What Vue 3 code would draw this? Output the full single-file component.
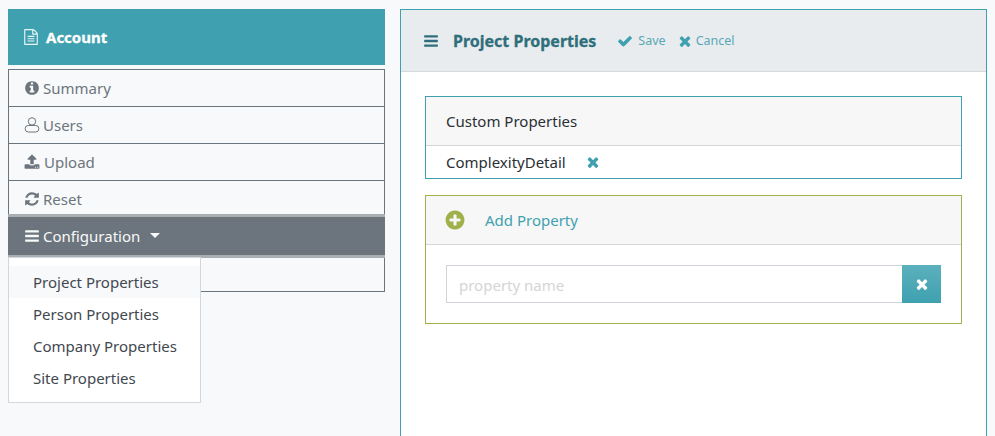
<script setup>
const P = {
  bars: 'M1664 1344v128q0 26-19 45t-45 19H192q-26 0-45-19t-19-45v-128q0-26 19-45t45-19h1408q26 0 45 19t19 45zm0-512v128q0 26-19 45t-45 19H192q-26 0-45-19t-19-45V832q0-26 19-45t45-19h1408q26 0 45 19t19 45zm0-512v128q0 26-19 45t-45 19H192q-26 0-45-19t-19-45V320q0-26 19-45t45-19h1408q26 0 45 19t19 45z',
  times: 'M1490 1322q0 40-28 68l-136 136q-28 28-68 28t-68-28l-294-294-294 294q-28 28-68 28t-68-28l-136-136q-28-28-28-68t28-68l294-294-294-294q-28-28-28-68t28-68l136-136q28-28 68-28t68 28l294 294 294-294q28-28 68-28t68 28l136 136q28 28 28 68t-28 68l-294 294 294 294q28 28 28 68z',
  check: 'M1671 566q0 40-28 68l-724 724-136 136q-28 28-68 28t-68-28l-136-136-362-362q-28-28-28-68t28-68l136-136q28-28 68-28t68 28l294 295 656-657q28-28 68-28t68 28l136 136q28 28 28 68z',
  plus: 'M1344 960V832q0-26-19-45t-45-19H1024V512q0-26-19-45t-45-19H832q-26 0-45 19t-19 45v256H512q-26 0-45 19t-19 45v128q0 26 19 45t45 19h256v256q0 26 19 45t45 19h128q26 0 45-19t19-45v-256h256q26 0 45-19t19-45zm320-64q0 209-103 385.5T1281.5 1561 896 1664t-385.5-103T231 1281.5 128 896t103-385.5T510.5 231 896 128t385.5 103T1561 510.5 1664 896z',
  info: 'M1152 1376v-160q0-14-9-23t-23-9h-96V672q0-14-9-23t-23-9H672q-14 0-23 9t-9 23v160q0 14 9 23t23 9h96v320h-96q-14 0-23 9t-9 23v160q0 14 9 23t23 9h448q14 0 23-9t9-23zm-128-896V320q0-14-9-23t-23-9H800q-14 0-23 9t-9 23v160q0 14 9 23t23 9h192q14 0 23-9t9-23zm640 416q0 209-103 385.5T1281.5 1561 896 1664t-385.5-103T231 1281.5 128 896t103-385.5T510.5 231 896 128t385.5 103T1561 510.5 1664 896z',
  upload: 'M1344 1472q0-26-19-45t-45-19-45 19-19 45 19 45 45 19 45-19 19-45zm256 0q0-26-19-45t-45-19-45 19-19 45 19 45 45 19 45-19 19-45zm128-224v320q0 40-28 68t-68 28H160q-40 0-68-28t-28-68v-320q0-40 28-68t68-28h427q21 56 70.5 92t110.5 36h256q61 0 110.5-36t70.5-92h427q40 0 68 28t28 68zm-325-648q-17 40-59 40h-256v448q0 26-19 45t-45 19H768q-26 0-45-19t-19-45V640H448q-42 0-59-40-17-39 14-69l448-448q18-19 45-19t45 19l448 448q31 30 14 69z',
  refresh: 'M1639 1056q0 5-1 7-64 268-268 434.5T892 1664q-146 0-282.5-55T366 1452l-129 129q-19 19-45 19t-45-19-19-45v-448q0-26 19-45t45-19h448q26 0 45 19t19 45-19 45l-137 137q71 66 161 102t187 36q134 0 250-65t186-179q11-17 53-117 8-23 30-23h192q13 0 22.5 9.5t9.5 22.5zm25-800v448q0 26-19 45t-45 19h-448q-26 0-45-19t-19-45 19-45l138-138q-148-137-349-137-134 0-250 65T460 628q-11 17-53 117-8 23-30 23H178q-13 0-22.5-9.5T146 736v-7q65-268 270-434.5T896 128q146 0 284 55.5T1425 340l130-129q19-19 45-19t45 19 19 45z',
  file: 'M1596 380q28 28 48 76t20 88v1152q0 40-28 68t-68 28H224q-40 0-68-28t-28-68V96q0-40 28-68t68-28h896q40 0 88 20t76 48zm-444-244v376h376q-10-29-22-41l-313-313q-12-12-41-22zm384 1528V640h-416q-40 0-68-28t-28-68V128H256v1536h1280zM512 800q0-14 9-23t23-9h704q14 0 23 9t9 23v64q0 14-9 23t-23 9H544q-14 0-23-9t-9-23v-64zm736 224q14 0 23 9t9 23v64q0 14-9 23t-23 9H544q-14 0-23-9t-9-23v-64q0-14 9-23t23-9h704zm0 256q14 0 23 9t9 23v64q0 14-9 23t-23 9H544q-14 0-23-9t-9-23v-64q0-14 9-23t23-9h704z'
}
const dropdownItems = ['Project Properties', 'Person Properties', 'Company Properties', 'Site Properties']
</script>

<template>
  <div class="page">
    <aside class="side">
      <div class="account">
        <svg class="ic-file" viewBox="0 0 1792 1792"><path :d="P.file" /></svg>
        <span>Account</span>
      </div>
      <div class="menu">
        <div class="item"><svg class="ic" viewBox="0 0 1792 1792"><path :d="P.info" /></svg><span>Summary</span></div>
        <div class="item">
          <svg class="ic ic-user" viewBox="0 0 16 16"><circle cx="8" cy="4.4" r="3.7" /><rect x="1.2" y="8.5" width="13.6" height="6.5" rx="3" /></svg>
          <span>Users</span>
        </div>
        <div class="item"><svg class="ic ic-up" viewBox="0 0 1792 1792"><path :d="P.upload" /></svg><span>Upload</span></div>
        <div class="item"><svg class="ic" viewBox="0 0 1792 1792"><path :d="P.refresh" /></svg><span>Reset</span></div>
        <div class="item active">
          <svg class="ic" viewBox="0 0 1792 1792"><path :d="P.bars" /></svg>
          <span>Configuration</span>
          <i class="caret"></i>
        </div>
        <div class="item last"></div>
        <ul class="dropdown">
          <li v-for="(d, i) in dropdownItems" :key="d" :class="{ hover: i === 0 }">{{ d }}</li>
        </ul>
      </div>
    </aside>

    <main class="panel">
      <header class="panel-head">
        <svg class="ic-bars" viewBox="0 0 1792 1792"><path :d="P.bars" /></svg>
        <h1>Project Properties</h1>
        <a class="act save"><svg viewBox="0 0 1792 1792"><path :d="P.check" /></svg>Save</a>
        <a class="act cancel"><svg viewBox="0 0 1792 1792"><path :d="P.times" /></svg>Cancel</a>
      </header>
      <div class="panel-body">
        <section class="card teal">
          <div class="card-head">Custom Properties</div>
          <div class="prop">
            <span>ComplexityDetail</span>
            <svg class="prop-x" viewBox="0 0 1792 1792"><path :d="P.times" /></svg>
          </div>
        </section>
        <section class="card olive">
          <div class="card-head add">
            <svg class="plus" viewBox="0 0 1792 1792"><path :d="P.plus" /></svg>
            <span>Add Property</span>
          </div>
          <div class="form">
            <input class="field" placeholder="property name" />
            <button class="clear"><svg viewBox="0 0 1792 1792"><path :d="P.times" /></svg></button>
          </div>
        </section>
      </div>
    </main>
  </div>
</template>

<style>
html, body { margin: 0; background: #f8f9fa; }
</style>

<style scoped>
.page {
  height: 436px;
  overflow: hidden;
  box-sizing: border-box;
  padding: 9px 8px 0;
  display: flex;
  align-items: flex-start;
  background: #f8f9fa;
  font-family: "Noto Sans", "Open Sans", sans-serif;
  font-size: 15px;
  color: #212529;
}
.side { width: 377px; flex: none; }
.account {
  height: 56px;
  background: #3fa1b0;
  color: #fff;
  font-weight: 700;
  font-size: 15px;
  -webkit-text-stroke: 0.3px #fff;
  display: flex;
  align-items: center;
  padding-left: 15px;
  gap: 7px;
}
.ic-file { width: 16px; height: 16px; fill: #e6f5f6; }
.menu {
  position: relative;
  margin-top: 4px;
  border: 1px solid #6c757d;
}
.item {
  height: 36px;
  display: flex;
  align-items: center;
  padding-left: 15px;
  color: #6c757d;
  border-bottom: 1px solid #6c757d;
  gap: 3px;
}
.ic { width: 16px; height: 16px; fill: currentColor; flex: none; }
.ic-user { fill: none; stroke: currentColor; stroke-width: 1; }
.ic-up { margin-right: 1px; }
.item.active {
  height: 38px;
  margin: -4px -1px 0;
  padding-left: 16px;
  background: #6c757d;
  color: #f8f9fa;
  border-top: 3px solid #a9aeb3;
  border-bottom: 3px solid #a9aeb3;
}
.caret {
  margin-left: 7px;
  margin-bottom: 2px;
  border-top: 5px solid currentColor;
  border-left: 5px solid transparent;
  border-right: 5px solid transparent;
}
.item.last { border-bottom: 0; height: 33px; }
.dropdown {
  position: absolute;
  left: -1px;
  top: 187px;
  width: 191px;
  margin: 0;
  padding: 8px 0;
  list-style: none;
  background: #fff;
  border: 1px solid #d3d6da;
  z-index: 2;
}
.dropdown li {
  height: 32px;
  line-height: 32px;
  padding-left: 24px;
  color: #41484f;
}
.dropdown li.hover { background: #f8f9fa; }

.panel {
  width: 587px;
  margin-left: 15px;
  height: 440px;
  box-sizing: border-box;
  flex: none;
  border: 1px solid #3fa1b0;
  background: #fff;
}
.panel-head {
  height: 61px;
  background: #e9ecef;
  border-bottom: 1px solid #d6d8da;
  display: flex;
  align-items: center;
  padding-left: 22px;
}
.ic-bars { width: 16px; height: 16px; fill: #2f6f7b; margin-right: 14px; }
h1 {
  margin: 0 21px 0 0;
  font-size: 16px;
  font-weight: 700;
  color: #2f6f7b;
  -webkit-text-stroke: 0.3px #2f6f7b;
}
.act {
  display: flex;
  align-items: center;
  color: #56a9b7;
  font-size: 12.5px;
}
.act svg { width: 16px; height: 16px; fill: #3fa1b0; }
.save { margin-right: 11px; gap: 5px; }
.cancel { gap: 3px; }
.panel-body {
  padding: 24px;
  display: flex;
  flex-direction: column;
  gap: 16px;
}
.card { border: 1px solid; background: #fff; }
.card.teal { border-color: #3fa1b0; }
.card.olive { border-color: #a0b04a; }
.card-head {
  height: 48px;
  background: #f7f7f7;
  border-bottom: 1px solid #d6d6d6;
  display: flex;
  align-items: center;
  padding-left: 20px;
  color: #2a3036;
}
.prop {
  height: 32px;
  display: flex;
  align-items: center;
  padding-left: 20px;
  color: #2a3036;
}
.prop-x { width: 16px; height: 16px; fill: #3fa1b0; margin-left: 19px; }
.card-head.add { color: #3fa1b0; }
.plus { width: 22px; height: 22px; fill: #a0b04a; margin: 0 19px 0 -2px; }
.form {
  padding: 20px;
  display: flex;
}
.field {
  flex: 1;
  min-width: 0;
  height: 38px;
  box-sizing: border-box;
  border: 1px solid #ced4da;
  border-right: 0;
  padding: 2px 12px 0;
  font: inherit;
  background: #fff;
  outline: none;
}
.field::placeholder { color: #d5d5d5; }
.clear {
  width: 39px;
  height: 38px;
  border: 0;
  padding: 0;
  background: linear-gradient(#5cb0bd, #3fa1b0);
  display: flex;
  align-items: center;
  justify-content: center;
}
.clear svg { width: 16px; height: 16px; fill: #fff; }
</style>
